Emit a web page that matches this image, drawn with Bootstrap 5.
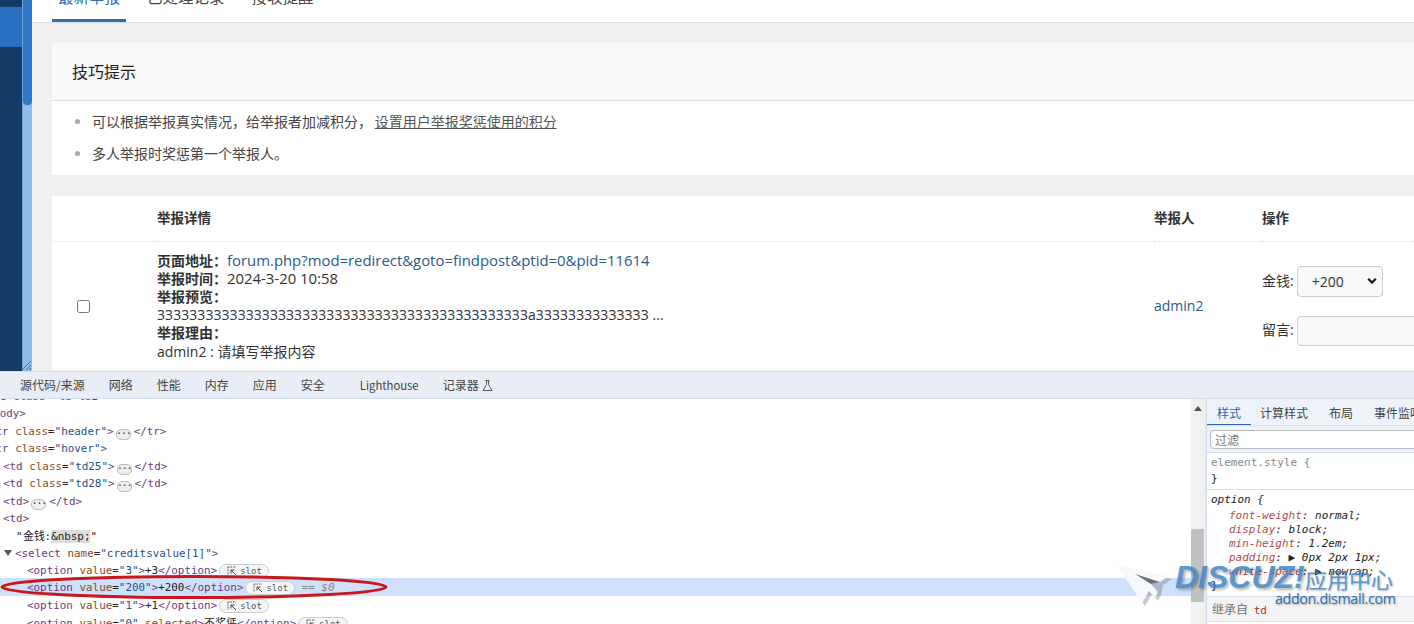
<!DOCTYPE html>
<html lang="zh-CN">
<head>
<meta charset="utf-8">
<title>举报管理</title>
<link href="https://cdn.jsdelivr.net/npm/bootstrap@5.3.0/dist/css/bootstrap.min.css" rel="stylesheet">
<style>
html,body{height:624px;overflow:hidden}
body{font-family:"Open Sans","Noto Sans CJK SC",sans-serif;font-size:14px;color:#333;background:#fff;position:relative}
.pane-top{height:371px;overflow:hidden}
.side-nav{width:23px;background:#153a66;border-right:1px solid #6aa0dc;padding-top:7px;flex:none}
.side-active{height:40px;background:#2a70c0}
.side-scroll{width:9px;background:#93bbe8;flex:none;position:relative}
.side-thumb{height:105px;background:#2f78c8;border-radius:0 0 4px 4px}
.side-grip{position:absolute;right:0;bottom:0}
.main-area{background:#efefef;flex:1;min-width:0}
.tab-strip{height:23px;background:#fff;border-bottom:1px solid #ddd;padding-left:20px;overflow:hidden;align-items:flex-end}
.tab-strip .nav-link{font-size:15.5px;line-height:24px;color:#444;padding:0 6px 13px;height:37px;margin-right:15px;border-bottom:3px solid transparent;box-sizing:border-box}
.tab-strip .nav-link.active{color:#2a6fb5;border-bottom-color:#2f6eb0}
.tips-card{margin:20px 0 21px 20px;border:0;border-radius:0;background:#fff}
.tips-card .card-header{height:58px;background:#f8f8f8;border-bottom:1px solid #ddd;border-radius:0;padding:0 20px;font-size:16px;line-height:58px;color:#222}
.tips-list{margin:0;padding:5px 0 5px 40px;list-style:disc}
.tips-list li{line-height:32px;color:#444}
.tips-list li::marker{color:#aaa}
.tips-list a{color:#555;text-decoration:underline;margin-left:-1px}
.report-card{margin-left:20px;background:#fff;border:0;border-radius:0}
.report-table{width:100%;table-layout:fixed;margin:0;color:#333}
.report-table th{height:45px;padding:0;font-weight:700;font-size:13.5px;vertical-align:middle;border-bottom:1px dotted #ddd;background:#fff;color:#333}
.report-table td{padding:0;vertical-align:middle;border:0;background:#fff;color:#333;height:129px}
.row-check{margin:2px 0 0 25px;display:block}
.detail-lines{line-height:18.15px;padding-top:1px}
.detail-lines a,.user-link{color:#2b5a8c;text-decoration:none}
.wide-latin{font-size:14.9px;line-height:1}
.digits-line{letter-spacing:.06px}
.op-line{display:flex;align-items:center;gap:3px;white-space:nowrap}
.op-line+.op-line{margin-top:19px}
.op-line span{margin-top:-2px}
.op-select{width:86px;height:31px;padding:0 0 0 14px;font-size:14px;background-color:#f8f8f8;border-color:#ccc;border-radius:4px;color:#333;background-position:right 5px center;background-size:10px 8px;background-image:url("data:image/svg+xml,%3csvg xmlns='http://www.w3.org/2000/svg' viewBox='0 0 11 9'%3e%3cpath fill='none' stroke='%23222' stroke-width='2.600' d='M1.200 2l4.300 4.300L9.800 2'/%3e%3c/svg%3e")}
.op-input{width:200px;height:30px;background:#f8f8f8;border-color:#ccc;border-radius:4px}
.pane-dev{height:253px;border-top:1px solid #d6dfee;overflow:hidden;font-family:"Noto Sans CJK SC","Open Sans",sans-serif}
.dev-tabs{height:27px;background:#e9eef6;border-bottom:1px solid #d3deef;font-size:12px;color:#444;padding-left:20px;gap:24px;line-height:26px;white-space:nowrap;position:relative;z-index:2}
.gap-extra{margin-left:11px;font-size:11.300px}
.dev-tree{width:1191px;flex:none;overflow:hidden;font:10.9px/17.45px "DejaVu Sans Mono",monospace;color:#222;margin-top:-11px}
.dl{height:17.45px;white-space:nowrap;display:block}
.i0{margin-left:-33px}.i1{margin-left:-20px}.i2{margin-left:-11px}.i3{margin-left:3px}.i4{margin-left:16px}.i5{margin-left:15px}.i6{margin-left:27px}
.tg{color:#6a3a80}.an{color:#8a4a2a}.av{color:#24508a}
.pill{display:inline-block;width:15px;height:11px;line-height:7px;border:1px solid #bbb;border-radius:5px;background:#eee;font-size:8px;text-align:center;vertical-align:-1px;margin:0 3px 0 2px;font-weight:700;color:#444}
.slot{display:inline-block;height:14px;line-height:12px;padding:0 6px 0 7px;border:1px solid #ccc;border-radius:7px;font-size:9px;color:#555;vertical-align:0;margin-left:2px;background:#f5f5f5}
.slot svg{vertical-align:-2px;margin-right:3px}
.dl-hi{background:#cfe0fb;height:18.45px;margin:-2px 0 1px;padding-top:1px}
.nbsp{background:#ddd}
.tri{display:inline-block;width:0;height:0;border-left:4px solid transparent;border-right:4px solid transparent;border-top:6px solid #555;margin-right:3px;margin-left:-11px;vertical-align:1px}
.tree-scroll{width:15px;background:#f1f1f1;flex:none;border-right:1px solid #e4e4e4}
.tree-arrow{width:0;height:0;border-left:4px solid transparent;border-right:4px solid transparent;border-bottom:5px solid #505050;margin:7px auto 0 3px}
.tree-thumb{background:#c1c1c1;height:73px;width:13px;margin-top:118px}
.dev-styles{flex:1;min-width:0;overflow:hidden;border-left:1px solid #d3deef;font:11px/14px "DejaVu Sans Mono",monospace;color:#222;background:#fff}
.st-tabs{height:27px;background:#eef2f9;border-bottom:1px solid #d3deef;font:12px/27px "Noto Sans CJK SC",sans-serif;color:#444;white-space:nowrap;overflow:hidden}
.st-tab{padding:0 10px;margin-right:1px;height:27px}
.st-tab.on{color:#2a62b8;border-bottom:2px solid #2a62b8;width:44px;flex:none;margin-right:-1px}
.st-filter{height:27px;padding:4px 3px;border-bottom:1px solid #d3deef;background:#eef2f9}
.st-filter div{height:19px;border:1px solid #bbb;border-radius:4px;background:#fff;font:12px/17px "Noto Sans CJK SC",sans-serif;color:#777;padding-left:4px;width:300px}
.st-block{border-bottom:1px solid #d3deef;padding:2px 4px 2px}
.st-line{line-height:16px}
.st-pair{padding-left:18px;height:14px;font-style:italic}
.st-first{margin-top:1px}
.st-tall{height:107px}
.pn{color:#b04a4a}
.grey{color:#888}
.it{font-style:italic}
.st-inherit{font:12px/24px "Noto Sans CJK SC",sans-serif;color:#777;padding-left:5px;background:#f4f4f4;border-bottom:1px solid #d3deef;height:25px}
.st-inherit b{font:11px "DejaVu Sans Mono",monospace;color:#a33;margin-left:3px}
.ring{position:absolute;left:0;top:572px;pointer-events:none}
.wm{position:absolute;left:1115px;top:560px;width:290px;height:56px;pointer-events:none}
.wm-plane{position:absolute;left:0;top:3px}
.wm-a{position:absolute;left:60px;top:0;font:italic 700 32px/34px "Liberation Sans",sans-serif;color:#3f86c9;opacity:.85;text-shadow:2px 2px 3px rgba(0,0,0,.35);white-space:nowrap}
.wm-b{position:absolute;left:190px;top:3px;font:22px/30px "Noto Sans CJK SC",sans-serif;color:#3f86c9;opacity:.85;text-shadow:1px 1px 2px rgba(0,0,0,.35);white-space:nowrap}
.wm-c{position:absolute;left:160px;top:29px;font:14.200px/20px "Open Sans",sans-serif;color:#2d6fb5;text-shadow:1px 1px 2px rgba(0,0,0,.3);white-space:nowrap;letter-spacing:-.3px}
</style>
</head>
<body>
<div class="pane-top d-flex">
  <div class="side-nav"><div class="side-active"></div></div>
  <div class="side-scroll">
    <div class="side-thumb"></div>
    <svg class="side-grip" width="11" height="11" viewBox="0 0 11 11"><path d="M1 10 10 1M5 10l5-5M8 10l2-2" stroke="#4a6a8c" fill="none"/></svg>
  </div>
  <div class="main-area">
    <ul class="nav tab-strip flex-nowrap">
      <li class="nav-item"><a class="nav-link active" href="#">最新举报</a></li>
      <li class="nav-item"><a class="nav-link" href="#">已处理记录</a></li>
      <li class="nav-item"><a class="nav-link" href="#">接收提醒</a></li>
    </ul>
    <div class="card tips-card">
      <div class="card-header">技巧提示</div>
      <ul class="tips-list">
        <li>可以根据举报真实情况，给举报者加减积分， <a href="#">设置用户举报奖惩使用的积分</a></li>
        <li>多人举报时奖惩第一个举报人。</li>
      </ul>
    </div>
    <div class="card report-card">
      <table class="table report-table">
        <colgroup><col style="width:105px"><col><col style="width:108px"><col style="width:152px"></colgroup>
        <thead><tr><th></th><th>举报详情</th><th>举报人</th><th>操作</th></tr></thead>
        <tbody><tr>
          <td><input type="checkbox" class="row-check" aria-label="选择"></td>
          <td><div class="detail-lines">
            <div><b>页面地址：</b><a class="wide-latin" href="#">forum.php?mod=redirect&amp;goto=findpost&amp;ptid=0&amp;pid=11614</a></div>
            <div><b>举报时间：</b><span class="wide-latin">2024-3-20 10:58</span></div>
            <div><b>举报预览：</b></div>
            <div class="digits-line">3333333333333333333333333333333333333333333333a33333333333333 ...</div>
            <div><b>举报理由：</b></div>
            <div>admin2 : 请填写举报内容</div>
          </div></td>
          <td><a class="user-link" href="#">admin2</a></td>
          <td>
            <div class="op-line"><span>金钱:</span><select class="form-select op-select" aria-label="金钱"><option>+200</option></select></div>
            <div class="op-line"><span>留言:</span><input class="form-control op-input" aria-label="留言"></div>
          </td>
        </tr></tbody>
      </table>
    </div>
  </div>
</div>
<div class="pane-dev">
  <div class="dev-tabs d-flex">
    <span>源代码/来源</span><span>网络</span><span>性能</span><span>内存</span><span>应用</span><span>安全</span><span class="gap-extra">Lighthouse</span>
    <span>记录器 <svg width="13" height="13" viewBox="0 0 13 13" style="vertical-align:-2px"><path d="M4.500 1.500h4M5.500 1.500v4L2 11.500h9L7.500 5.500v-4" fill="none" stroke="#555"/></svg></span>
  </div>
  <div class="d-flex">
    <div class="dev-tree">
      <div class="dl i0"><span class="tg">&lt;table</span> <span class="an">class</span>=<span class="av">"tb tb2 "</span><span class="tg">&gt;</span></div>
      <div class="dl i1"><span class="tg">&lt;tbody&gt;</span></div>
      <div class="dl i2"><span class="tg">&lt;tr</span> <span class="an">class</span>=<span class="av">"header"</span><span class="tg">&gt;</span><span class="pill">···</span><span class="tg">&lt;/tr&gt;</span></div>
      <div class="dl i2"><span class="tg">&lt;tr</span> <span class="an">class</span>=<span class="av">"hover"</span><span class="tg">&gt;</span></div>
      <div class="dl i3"><span class="tg">&lt;td</span> <span class="an">class</span>=<span class="av">"td25"</span><span class="tg">&gt;</span><span class="pill">···</span><span class="tg">&lt;/td&gt;</span></div>
      <div class="dl i3"><span class="tg">&lt;td</span> <span class="an">class</span>=<span class="av">"td28"</span><span class="tg">&gt;</span><span class="pill">···</span><span class="tg">&lt;/td&gt;</span></div>
      <div class="dl i3"><span class="tg">&lt;td&gt;</span><span class="pill">···</span><span class="tg">&lt;/td&gt;</span></div>
      <div class="dl i3"><span class="tg">&lt;td&gt;</span></div>
      <div class="dl i4">"金钱:<span class="nbsp">&amp;nbsp;</span>"</div>
      <div class="dl i5"><span class="tri"></span><span class="tg">&lt;select</span> <span class="an">name</span>=<span class="av">"creditsvalue[1]"</span><span class="tg">&gt;</span></div>
      <div class="dl i6"><span class="tg">&lt;option</span> <span class="an">value</span>=<span class="av">"3"</span><span class="tg">&gt;</span>+3<span class="tg">&lt;/option&gt;</span><span class="slot"><svg width="10" height="10" viewBox="0 0 10 10"><path d="M1 1h8M1 1v8" fill="none" stroke="#555" stroke-dasharray="1.500 1"/><path d="M4 4l5 5M4 4h3.500M4 4v3.500" fill="none" stroke="#444"/></svg>slot</span></div>
      <div class="dl dl-hi"><span class="i6 d-inline-block"><span class="tg">&lt;option</span> <span class="an">value</span>=<span class="av">"200"</span><span class="tg">&gt;</span>+200<span class="tg">&lt;/option&gt;</span><span class="slot"><svg width="10" height="10" viewBox="0 0 10 10"><path d="M1 1h8M1 1v8" fill="none" stroke="#555" stroke-dasharray="1.500 1"/><path d="M4 4l5 5M4 4h3.500M4 4v3.500" fill="none" stroke="#444"/></svg>slot</span> <span class="grey">== <i>$0</i></span></span></div>
      <div class="dl i6"><span class="tg">&lt;option</span> <span class="an">value</span>=<span class="av">"1"</span><span class="tg">&gt;</span>+1<span class="tg">&lt;/option&gt;</span><span class="slot"><svg width="10" height="10" viewBox="0 0 10 10"><path d="M1 1h8M1 1v8" fill="none" stroke="#555" stroke-dasharray="1.500 1"/><path d="M4 4l5 5M4 4h3.500M4 4v3.500" fill="none" stroke="#444"/></svg>slot</span></div>
      <div class="dl i6"><span class="tg">&lt;option</span> <span class="an">value</span>=<span class="av">"0"</span> <span class="an">selected</span><span class="tg">&gt;</span>不奖惩<span class="tg">&lt;/option&gt;</span><span class="slot"><svg width="10" height="10" viewBox="0 0 10 10"><path d="M1 1h8M1 1v8" fill="none" stroke="#555" stroke-dasharray="1.500 1"/><path d="M4 4l5 5M4 4h3.500M4 4v3.500" fill="none" stroke="#444"/></svg>slot</span></div>
    </div>
    <div class="tree-scroll"><div class="tree-arrow"></div><div class="tree-thumb"></div></div>
    <div class="dev-styles">
      <div class="st-tabs d-flex"><span class="st-tab on">样式</span><span class="st-tab">计算样式</span><span class="st-tab">布局</span><span class="st-tab">事件监听器</span></div>
      <div class="st-filter"><div>过滤</div></div>
      <div class="st-block"><div class="st-line grey">element.style {</div><div class="st-line">}</div></div>
      <div class="st-block st-tall">
        <div class="st-line it">option {</div>
        <div class="st-pair st-first"><span class="pn">font-weight</span>: normal;</div>
        <div class="st-pair"><span class="pn">display</span>: block;</div>
        <div class="st-pair"><span class="pn">min-height</span>: 1.2em;</div>
        <div class="st-pair"><span class="pn">padding</span>: ▶ 0px 2px 1px;</div>
        <div class="st-pair"><span class="pn">white-space</span>: ▶ nowrap;</div>
        <div>}</div>
      </div>
      <div class="st-inherit">继承自 <b>td</b></div>
    </div>
  </div>
</div>
<svg class="ring" width="392" height="30" viewBox="0 0 392 30"><ellipse cx="194" cy="15" rx="192" ry="10.500" fill="none" stroke="#c8181c" stroke-width="3"/></svg>
<div class="wm">
  <svg class="wm-plane" width="60" height="46" viewBox="0 0 60 46"><path d="M5 5 57 16 48 22 46 32 43 38 37 31 30 43Z" fill="#555" opacity=".3"/><path d="M2 2 54 13 45 19 36 21 43 29 40 35 34 28 27 40Z" fill="#f6f8fc"/><path d="M20 11 45 19 36 21Z" fill="#6b7078"/></svg>
  <span class="wm-a">DISCUZ!</span><span class="wm-b">应用中心</span><span class="wm-c">addon.dismall.com</span>
</div>
<script src="https://cdn.jsdelivr.net/npm/bootstrap@5.3.0/dist/js/bootstrap.bundle.min.js"></script>
</body>
</html>
